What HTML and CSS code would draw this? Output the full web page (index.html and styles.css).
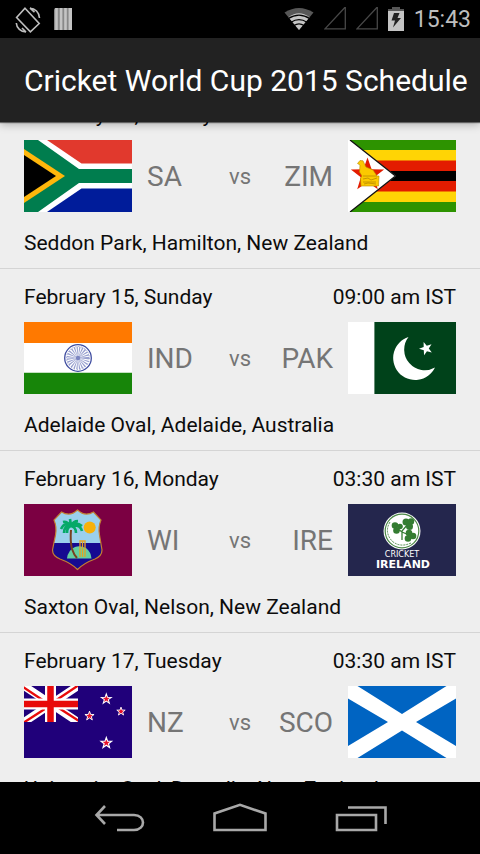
FILE: index.html
```html
<!DOCTYPE html>
<html lang="en">
<head>
<meta charset="utf-8">
<meta name="viewport" content="width=device-width, initial-scale=1">
<title>Cricket World Cup 2015 Schedule</title>
<link rel="stylesheet" href="styles.css">
</head>
<body>
<svg class="defs" aria-hidden="true">
  <defs>
    <path id="star" d="M0-10 2.35-3.24 9.51-3.09 3.8 1.24 5.88 8.09 0 4 -5.88 8.09-3.8 1.24-9.51-3.09-2.35-3.24Z"/>
  </defs>
</svg>
<div class="screen">
  <div class="status-bar">
    <div class="status-group">
      <svg class="icon-rotate" width="28" height="28" viewBox="0 0 28 28" fill="none" stroke="#bebebe" stroke-width="1.6">
        <path d="M11 3.2 25.200 18.500 16.400 26.800 2.600 12.500Z"/>
        <path d="M16 3.200C21 3.200 25.300 7.500 25.500 13M16 3.200 20.500 7.200M12 27C7 27 2.500 23 2.300 18M12 27 8 23"/>
      </svg>
      <svg width="18" height="22" viewBox="0 0 18 22">
        <path d="M0 1.500 1 0H18V20.500L17 22H0Z" fill="#888"/>
        <path d="M1.200 0H3.800V22H1.200ZM5.800 0H8.400V22H5.800ZM10.200 0H12.800V22H10.200ZM14.600 0H18V22H14.600Z" fill="#c4c4c4"/>
      </svg>
    </div>
    <div class="status-group status-right">
      <svg class="icon-wifi" width="30" height="24" viewBox="0 0 30 24">
        <path d="M15 23 0.500 5.500Q15-3.500 29.500 5.500Z" fill="#575757"/>
        <path d="M15 23 4.500 10.200Q15 2.500 25.500 10.200Z" fill="#c4c4c4"/>
        <g fill="none" stroke="#000" stroke-width="1.200"><path d="M4 11.800Q15 4.500 26 11.800"/><path d="M7 15.200Q15 10 23 15.200"/><path d="M10 18.600Q15 15.300 20 18.600"/></g>
      </svg>
      <svg class="icon-signal" width="22" height="24" viewBox="0 0 22 24" fill="none" stroke="#484848" stroke-width="1.300"><path d="M21.300 0V21.800H1Z"/></svg>
      <svg class="icon-signal-2" width="22" height="24" viewBox="0 0 22 24" fill="none" stroke="#484848" stroke-width="1.300"><path d="M21.300 0V21.800H1Z"/></svg>
      <svg class="icon-battery" width="16" height="24" viewBox="0 0 16 24">
        <path d="M0 2H4V0H12V2H16V4H0Z" fill="#575757"/><path d="M0 4H16V24H0Z" fill="#c4c4c4"/>
        <path d="M6 6H11.500L9.500 11H13L5 20.500 7 13.500H3.500Z" fill="#222"/>
      </svg>
      <span class="clock">15:43</span>
    </div>
  </div>

  <header class="app-bar"><h1>Cricket World Cup 2015 Schedule</h1></header>

  <main class="viewport">
    <ul class="matches">
      <li class="match">
        <div class="when"><span>February 15, Sunday</span><span>06:30 am IST</span></div>
        <div class="teams">
          <svg class="flag" viewBox="0 0 108 72" role="img" aria-label="South Africa">
            <path fill="#fff" d="M0 0H108V72H0Z"/>
            <path fill="#e1392d" d="M23 0H108V23.500H57.500Z"/><path fill="#001c9a" d="M23 72H108V48.500H57.500Z"/>
            <path fill="#007d4e" d="M0 0H14L55 29H108V43H55L14 72H0Z"/>
            <path fill="#ffb70b" d="M0 9 41 36 0 63Z"/><path d="M0 15 32 36 0 57Z"/>
          </svg>
          <span class="team">SA</span><span class="vs">vs</span><span class="team away">ZIM</span>
          <svg class="flag" viewBox="0 0 108 72" role="img" aria-label="Zimbabwe">
            <path fill="#2d9300" d="M0 0H108V72H0Z"/><path fill="#ffd405" d="M0 10H108V62H0Z"/><path fill="#e31c00" d="M0 20.500H108V51.500H0Z"/><path d="M0 31H108V41H0Z"/>
            <path fill="#fff" d="M0 0H2L48 36 2 72H0Z"/><path fill="none" stroke="#111" stroke-width="1.300" d="M2 0 47.500 36 2 72"/>
            <use href="#star" fill="#e31c00" transform="translate(19.500 35) scale(1.750)"/>
            <path fill="#fcc900" stroke="#b98a00" stroke-width=".6" d="M9.500 23.500 12 20.500 15 20.800 16.500 24 18 27 25 30 29 36H31L30.500 46H13L12.500 38 14 36 11.500 32 12 25Z"/>
            <path fill="none" stroke="#b98a00" stroke-width=".8" d="M15 36H29M15 39 20 38 23 40 29 38M15 42H28M16 44 20 43 28 44"/>
          </svg>
        </div>
        <div class="venue">Seddon Park, Hamilton, New Zealand</div>
      </li>
      <li class="match">
        <div class="when"><span>February 15, Sunday</span><span>09:00 am IST</span></div>
        <div class="teams">
          <svg class="flag" viewBox="0 0 108 72" role="img" aria-label="India">
            <path fill="#fff" d="M0 0H108V72H0Z"/><path fill="#ff7900" d="M0 0H108V21H0Z"/><path fill="#178509" d="M0 51H108V72H0Z"/><path fill="#c5e1c2" d="M0 50H108V51H0Z"/>
            <g fill="none" stroke="#3d4b9f"><circle cx="54" cy="36" r="13.300" stroke-width="1.300"/><circle cx="54" cy="36" r="11.500" stroke="#8790c5" stroke-width=".8" stroke-dasharray="1 2"/><circle cx="54" cy="36" r="6.500" stroke="#98a0cf" stroke-width="10" stroke-dasharray=".85 .85"/></g>
            <circle cx="54" cy="36" r="2.200" fill="#7b85c0"/>
          </svg>
          <span class="team">IND</span><span class="vs">vs</span><span class="team away">PAK</span>
          <svg class="flag" viewBox="0 0 108 72" role="img" aria-label="Pakistan">
            <path fill="#fff" d="M0 0H27V72H0Z"/><path fill="#00421a" d="M26.400 0H108V72H26.400Z"/>
            <path fill="#fff" d="M60.500 15A22 22 0 1 0 87 45.500A20.600 20.600 0 0 1 60.500 15Z"/>
            <use href="#star" fill="#fff" transform="translate(78 26.500) rotate(-20) scale(.7)"/>
          </svg>
        </div>
        <div class="venue">Adelaide Oval, Adelaide, Australia</div>
      </li>
      <li class="match">
        <div class="when"><span>February 16, Monday</span><span>03:30 am IST</span></div>
        <div class="teams">
          <svg class="flag" viewBox="0 0 108 72" role="img" aria-label="West Indies">
            <defs><clipPath id="shield"><path d="M37.500 8Q46 13 53.500 6Q61 13 69.500 8L77 16Q74 23 75.500 31L78 46Q78 52 71 55Q60 59 53.500 65.500Q47 59 36 55Q28.500 52 28.500 46L31.500 31Q33 23 30 16Z"/></clipPath></defs>
            <path fill="#7b0042" d="M0 0H108V72H0Z"/>
            <g clip-path="url(#shield)"><path fill="#9bd0ec" d="M25 0H82V39H25Z"/><path fill="#170a91" d="M25 39H82V70H25Z"/></g>
            <path fill="#66cfa0" d="M43 54.500Q44 46 51 43Q56 41 62 44Q67 48 67.500 54.500Z"/>
            <circle cx="65.700" cy="23.500" r="6" fill="#f6b10a"/>
            <path fill="none" stroke="#793f20" stroke-width="2" d="M47 26Q46 37 48 45 50 51 53 54"/>
            <path fill="none" stroke="#05a968" stroke-width="2.600" d="M47 22Q41 17 37 25M47 22Q40 21 40 29M47 22Q43 23 43 29M47 22Q52 17 58 22M47 22Q56 20 58 27M47 22Q52 23 52 29M47 22Q43 17 39 18M47 22Q49 17 54 17M47 22 46 15"/>
            <path fill="none" stroke="#e8a321" stroke-width="1.300" d="M56 53V37M58.500 53V37M61 53V37M55.300 37H61.700"/>
            <path fill="none" stroke="#c48032" stroke-width="1.200" d="M37.500 8Q46 13 53.500 6Q61 13 69.500 8L77 16Q74 23 75.500 31L78 46Q78 52 71 55Q60 59 53.500 65.500Q47 59 36 55Q28.500 52 28.500 46L31.500 31Q33 23 30 16Z"/>
          </svg>
          <span class="team">WI</span><span class="vs">vs</span><span class="team away">IRE</span>
          <svg class="flag" viewBox="0 0 108 72" role="img" aria-label="Cricket Ireland">
            <path fill="#24264d" d="M0 0H108V72H0Z"/>
            <circle cx="54" cy="27" r="18.500" fill="#fff"/><circle cx="54" cy="27" r="16.800" fill="none" stroke="#4c8847" stroke-width="1.200"/>
            <path fill="none" stroke="#4c8847" stroke-width="1" d="M42 18Q36 28 44 37 52 44 63 39" stroke-dasharray="2 1"/>
            <g fill="#347c32"><circle cx="58" cy="18" r="3.500"/><circle cx="63" cy="17.500" r="3.200"/><circle cx="61.500" cy="22.500" r="3.500"/><circle cx="47" cy="21.500" r="3.300"/><circle cx="48.500" cy="26.500" r="3.300"/><circle cx="52" cy="22.500" r="2.800"/><circle cx="61" cy="29" r="3.300"/><circle cx="65" cy="32" r="3.300"/><circle cx="60" cy="34.500" r="3.300"/></g>
            <path fill="none" stroke="#347c32" stroke-width="1.300" d="M60 20 54 27 54 36M50 25 54 28 61 31"/>
            <text class="crest-small" x="54" y="53" text-anchor="middle">CRICKET</text>
            <text class="crest-large" x="55" y="64" text-anchor="middle">IRELAND</text>
          </svg>
        </div>
        <div class="venue">Saxton Oval, Nelson, New Zealand</div>
      </li>
      <li class="match">
        <div class="when"><span>February 17, Tuesday</span><span>03:30 am IST</span></div>
        <div class="teams">
          <svg class="flag" viewBox="0 0 108 72" role="img" aria-label="New Zealand">
            <defs><clipPath id="canton"><path d="M0 0H54V36H0Z"/></clipPath></defs>
            <path fill="#20007a" d="M0 0H108V72H0Z"/>
            <g clip-path="url(#canton)" fill="none"><path stroke="#fff" stroke-width="8" d="M0 0 54 36M54 0 0 36"/><path stroke="#e80a0a" stroke-width="2.400" d="M-1 1 26 19M27 17 55 35M55-1 28 17M27 19-1 37"/><path stroke="#fff" stroke-width="11" d="M26.500 0V36M0 18H54"/><path stroke="#e80a0a" stroke-width="6.500" d="M26.500 0V36M0 18H54"/></g>
            <g fill="#e8102a" stroke="#fff" stroke-width="2"><use href="#star" transform="translate(82.300 13) scale(.52)"/><use href="#star" transform="translate(65.500 30) scale(.48)"/><use href="#star" transform="translate(97 25.500) scale(.44)"/><use href="#star" transform="translate(82.300 57) scale(.56)"/></g>
          </svg>
          <span class="team">NZ</span><span class="vs">vs</span><span class="team away">SCO</span>
          <svg class="flag" viewBox="0 0 108 72" role="img" aria-label="Scotland">
            <path fill="#fff" d="M0 0H108V72H0Z"/><path fill="#0064c2" d="M9.500 0H98.500L54 28ZM0 12.500 40 36 0 60ZM9.500 72H98.500L54 44.500ZM108 12.500 68 36 108 60Z"/>
          </svg>
        </div>
        <div class="venue">University Oval, Dunedin, New Zealand</div>
      </li>
    </ul>
  </main>

  <nav class="nav-bar">
    <button type="button" aria-label="Back"><svg width="54" height="32" viewBox="0 0 54 32" fill="none" stroke="#a8a8a8" stroke-width="2.600"><path d="M14 4 5.500 13 14 22M5.500 13H43C55 13 55 28 43 28H26"/></svg></button>
    <button type="button" aria-label="Home"><svg width="54" height="32" viewBox="0 0 54 32" fill="none" stroke="#a8a8a8" stroke-width="2.600"><path d="M1.500 28V11.500L27 2.800 52.500 11.500V28Z"/></svg></button>
    <button type="button" aria-label="Recent apps"><svg width="54" height="32" viewBox="0 0 54 32" fill="none" stroke="#a8a8a8" stroke-width="2.600"><path d="M2 13H41V28H2ZM13 5.500H50.500V22"/></svg></button>
  </nav>
</div>
</body>
</html>
```
FILE: styles.css
```css
* { box-sizing: border-box; }

body {
  margin: 0;
  background: #000;
  color: #0c0c0c;
  font-family: Roboto, "Noto Sans", sans-serif;
}

.defs {
  position: absolute;
  width: 0;
  height: 0;
}

.screen {
  display: flex;
  flex-direction: column;
  height: 100vh;
}

svg { display: block; flex: none; }

.status-bar {
  display: flex;
  justify-content: space-between;
  align-items: center;
  height: 38px;
  padding: 0 9px 0 14px;
  background: #000;
}

.status-group {
  display: flex;
  align-items: center;
  gap: 12px;
}

.status-right { gap: 10px; }

.clock {
  padding-top: 2px;
  color: #bebebe;
  font-size: 23px;
  line-height: 36px;
}

.app-bar {
  position: relative;
  z-index: 1;
  display: flex;
  align-items: center;
  height: 84px;
  padding: 2px 0 0 24px;
  background: #222;
  box-shadow: 0 1px 1px rgba(0, 0, 0, .5), 0 3px 8px rgba(0, 0, 0, .25);
}

.app-bar h1 {
  margin: 0;
  color: #fff;
  font-size: 30px;
  font-weight: 400;
  line-height: 36px;
  white-space: nowrap;
}

.viewport {
  flex: 1;
  min-height: 0;
  overflow: hidden;
  background: #eee;
}

/* The list is shown part-way scrolled. */
.matches {
  margin: -35px 0 0;
  padding: 0;
  list-style: none;
}

.match {
  padding: 15px 24px 12px;
  border-bottom: 1px solid #d4d4d4;
}

.when {
  display: flex;
  justify-content: space-between;
}

.when,
.venue {
  font-size: 21px;
  line-height: 26px;
  white-space: nowrap;
}

.teams {
  display: grid;
  grid-template-columns: 108px 1fr auto 1fr 108px;
  align-items: center;
  column-gap: 15px;
  margin: 12px 0 18px;
  color: #757575;
}

.flag {
  width: 108px;
  height: 72px;
}

.team { font-size: 28px; }
.away { text-align: right; }
.vs { font-size: 22px; }

.crest-small,
.crest-large {
  fill: #fff;
  font-family: "DejaVu Sans", sans-serif;
}

.crest-small { font-size: 8px; }

.crest-large {
  font-size: 11px;
  font-weight: 700;
}

.nav-bar {
  display: flex;
  justify-content: center;
  gap: 68px;
  height: 72px;
  background: #000;
}

.nav-bar button {
  display: flex;
  align-items: center;
  padding: 0;
  border: 0;
  background: none;
}
```
